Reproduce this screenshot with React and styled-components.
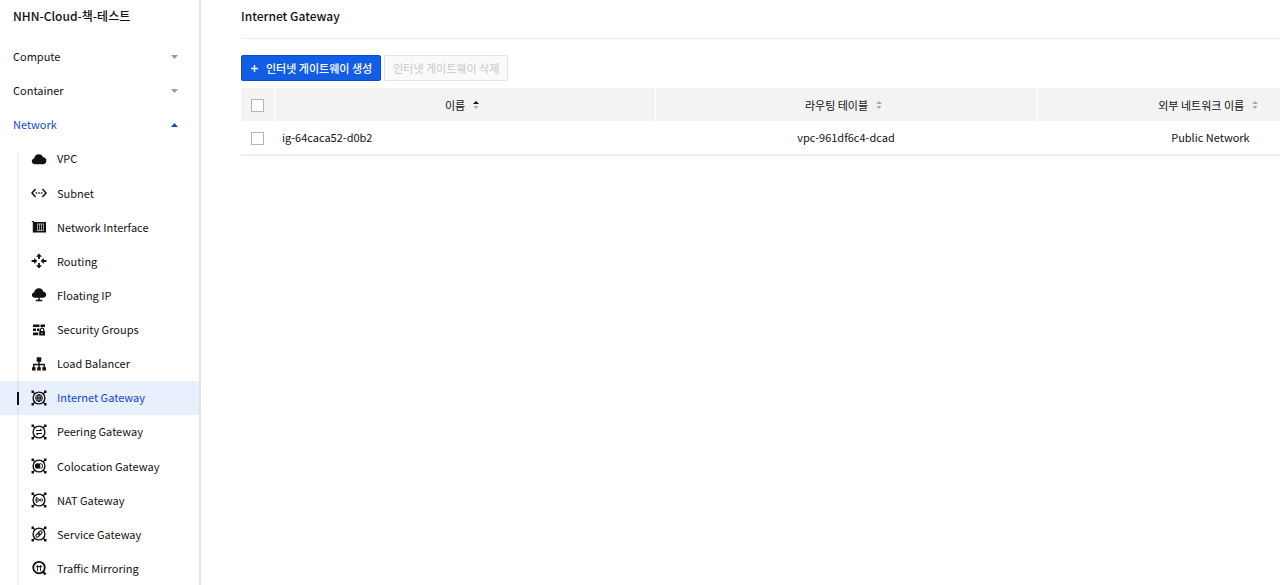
import React, { useState } from 'react';
import styled, { createGlobalStyle } from 'styled-components';

const GlobalStyle = createGlobalStyle`
  * {
    box-sizing: border-box;
  }
  body {
    margin: 0;
    background: #fff;
    color: #111;
    font-family: 'Noto Sans CJK KR', 'Noto Sans', sans-serif;
    font-size: 11px;
    line-height: 15px;
  }
  button, input {
    font-family: inherit;
  }
`;

const Layout = styled.div`
  display: flex;
  height: 100vh;
  overflow: hidden;
`;

const Sidebar = styled.nav`
  flex: 0 0 201px;
  border-right: 2px solid #e4e4e4;
  overflow: hidden;
`;

const ProjectName = styled.div`
  padding: 7px 13px 0;
  height: 40px;
  font-size: 12px;
  font-weight: 500;
  line-height: 18px;
`;

const Menu = styled.div`
  display: grid;
  grid-template-rows: repeat(3, 1fr) 13fr;
  min-height: 546px;
`;

const MenuButton = styled.button`
  display: flex;
  align-items: center;
  justify-content: space-between;
  width: 100%;
  padding: 0 21px 1px 13px;
  border: 0;
  background: none;
  color: ${({ $open }) => ($open ? '#0b49cf' : '#111')};
  font-size: 11px;
  line-height: 15px;
  cursor: pointer;
`;

const SubMenu = styled.ul`
  display: grid;
  grid-auto-rows: 1fr;
  margin: 0;
  padding: 0;
  list-style: none;
`;

const SubItem = styled.li`
  display: flex;
  padding-left: 17px;
  background: ${({ $active }) => ($active ? '#e8effd' : 'transparent')};
`;

const Guide = styled.span`
  display: flex;
  align-items: center;
  width: 2px;
  background: ${({ $active }) => ($active ? '#e0e6f2' : '#efefef')};

  ${SubItem}:first-child & {
    margin-top: 10px;
  }
`;

const Marker = styled.span`
  width: 2px;
  height: 13px;
  background: #111;
`;

const SubLink = styled.a`
  display: flex;
  flex: 1;
  align-items: center;
  gap: 10px;
  padding: 0 0 1px 12px;
  color: ${({ $active }) => ($active ? '#0b49cf' : '#111')};
  text-decoration: none;
  white-space: nowrap;
`;

const Icon = styled.svg`
  flex: none;
  width: 16px;
  height: 16px;
  fill: none;
  stroke: #111;
  color: #111;
`;

const Main = styled.main`
  flex: 1;
  min-width: 0;
  padding-left: 40px;
  overflow: hidden;
`;

const PageTitle = styled.h1`
  margin: 0;
  padding-top: 7px;
  height: 39px;
  border-bottom: 1px solid #eee;
  font-size: 12px;
  font-weight: 500;
  line-height: 18px;
`;

const Toolbar = styled.div`
  display: flex;
  gap: 3px;
  padding: 16px 0 7px;
`;

const Button = styled.button`
  display: flex;
  align-items: center;
  gap: 7px;
  height: 26px;
  padding: 0 8px;
  border: 1px solid ${({ $primary }) => ($primary ? '#0a4bd6' : '#e2e2e2')};
  border-radius: 2px;
  background: ${({ $primary }) => ($primary ? '#125de6' : '#fafafa')};
  color: ${({ $primary }) => ($primary ? '#fff' : '#c8c8c8')};
  font-size: 11px;
  font-weight: ${({ $primary }) => ($primary ? 500 : 400)};
  line-height: 16px;
  white-space: nowrap;
`;

const Table = styled.table`
  width: 110%;
  border-collapse: collapse;
  table-layout: fixed;
`;

const Th = styled.th`
  width: ${({ $width }) => $width || 'auto'};
  height: 33px;
  padding: 0 ${({ $first }) => ($first ? '0' : '5px')} 0 0;
  border-left: ${({ $first }) => ($first ? '0' : '1px solid #fff')};
  background: #f3f3f3;
  font-weight: 400;
`;

const Td = styled.td`
  height: 34px;
  padding: 0 8px;
  border-bottom: 2px solid #eee;
  text-align: ${({ $align }) => $align || 'center'};
`;

const CheckCell = styled.div`
  display: flex;
  padding: 2px 0 0 ${({ $body }) => ($body ? '2px' : '10px')};
`;

const Checkbox = styled.input`
  appearance: none;
  width: 13px;
  height: 13px;
  margin: 0;
  border: 1px solid #b4b4b4;
  background: #fff;

  &:checked {
    background: #125de6;
  }
`;

const SortButton = styled.button`
  display: inline-flex;
  align-items: center;
  gap: 8px;
  padding: 0;
  border: 0;
  background: none;
  color: #111;
  font-size: 11px;
  line-height: 15px;
  vertical-align: middle;
`;

const Arrow = ({ open }) => (
  <svg width="7" height="4" viewBox="0 0 7 4">
    <path
      d={open ? 'M0 4L3.5 0L7 4Z' : 'M0 0H7L3.5 4Z'}
      fill={open ? '#0b49cf' : '#999'}
    />
  </svg>
);

const PlusIcon = () => (
  <svg width="9" height="8" viewBox="0 0 9 8">
    <path d="M4.5 1V8M1 4.5H8" stroke="#fff" strokeWidth="1.4" />
  </svg>
);

const SortIcon = ({ sorted }) => (
  <svg width="6" height="8" viewBox="0 0 6 8">
    <path d="M0 3L3 0L6 3Z" fill={sorted ? '#111' : '#aaa'} />
    <path d="M0.5 5H5.5L3 8Z" fill="#aaa" />
  </svg>
);

// ring with four corner nodes, shared by every gateway icon
const GatewayFrame = ({ children }) => (
  <>
    <circle cx="8" cy="8" r="5.9" strokeWidth="1.4" />
    <path
      d="M1.5 1.5L4 4M14.5 1.5L12 4M1.5 14.5L4 12M14.5 14.5L12 12"
      strokeWidth="1.3"
    />
    <path
      d="M.5.5h2.5v2.5H.5zM13 .5h2.5v2.5H13zM.5 13h2.5v2.5H.5zM13 13h2.5v2.5H13z"
      fill="currentColor"
      stroke="none"
    />
    {children}
  </>
);

const icons = {
  vpc: (
    <path
      d="M4 13.2C2.1 13.2.8 12 .8 10.3c0-1.5 1-2.6 2.3-2.9C3.4 4.9 5.3 3.2 7.7 3.2c2 0 3.6 1.1 4.3 2.9 1.9.3 3.4 1.8 3.4 3.7 0 2-1.5 3.4-3.5 3.4z"
      fill="currentColor"
      stroke="none"
    />
  ),
  subnet: (
    <>
      <path d="M4.6 4L1 8l3.6 4M11.4 4L15 8l-3.6 4" strokeWidth="1.5" />
      <path
        d="M4.7 7.3h1.4v1.4H4.7zM7.3 7.3h1.4v1.4H7.3zM9.9 7.3h1.4v1.4H9.9z"
        fill="currentColor"
        stroke="none"
      />
    </>
  ),
  nic: (
    <>
      <path
        d="M.8 2h2v1H15v10.5H1.8V3H.8z"
        fill="currentColor"
        stroke="none"
      />
      <path
        d="M6.5 5v6.5M8.5 5v6.5M10.5 5v6.5M12.5 5v6.5M6 5h7M6 11.5h7"
        stroke="#bbb"
        strokeWidth=".8"
      />
    </>
  ),
  routing: (
    <>
      <path d="M8 2V6M8 10v4M.6 8H4M12 8h3.4" strokeWidth="1.8" />
      <path
        d="M8 .4L5 3.8h6zM8 15.6L5 12.2h6zM6.3 8L3.2 5v6zM9.7 8l3.1-3v6z"
        fill="currentColor"
        stroke="none"
      />
    </>
  ),
  floating: (
    <>
      <path
        d="M4 10.8C2.1 10.8.9 9.7.9 8.1c0-1.4.8-2.4 2.2-2.7C3.4 3 5.4 1.3 7.8 1.3c2.2 0 3.8 1.2 4.4 3.1 1.8.4 3 1.6 3 3.2 0 1.9-1.4 3.2-3.3 3.2z"
        fill="currentColor"
        stroke="none"
      />
      <path d="M8 10.5v3M4.8 13.5h6.4" strokeWidth="1.5" />
    </>
  ),
  security: (
    <>
      <path
        d="M2 2.5h6.5v2.5H2zM9.5 2.5h4.5v2.5H9.5zM2 6.5h3v2.5H2zM6 6.5h2.5v2.5H6zM2 10.5h5.3v2.8H2zM8.2 9h5.8v4.5H8.2z"
        fill="currentColor"
        stroke="none"
      />
      <path d="M9.5 9V7.8c0-2.2 3.2-2.2 3.2 0V9" strokeWidth="1.1" />
      <path d="M11.1 10.5v1.5" stroke="#fff" strokeWidth=".8" />
    </>
  ),
  balancer: (
    <>
      <path
        d="M5.7 1.3h4.6v4.5H5.7zM1 11.2h3.6v3.2H1zM6.2 11.2h3.6v3.2H6.2zM11.4 11.2H15v3.2h-3.6z"
        fill="currentColor"
        stroke="none"
      />
      <path d="M8 5v7M2.8 12V8.5h10.4V12" strokeWidth="1.4" />
    </>
  ),
  internet: (
    <GatewayFrame>
      <circle cx="8" cy="8" r="3.4" />
      <ellipse cx="8" cy="8" rx="1.5" ry="3.4" strokeWidth=".9" />
      <path d="M4.6 8h6.8M8 4.6v6.8" strokeWidth=".9" />
    </GatewayFrame>
  ),
  peering: (
    <GatewayFrame>
      <path d="M5 6.5h5.5M5.5 9.5H11" />
      <path
        d="M9 4.4l2.6 2.1H9zM7 11.6L4.4 9.5H7z"
        fill="currentColor"
        stroke="none"
      />
    </GatewayFrame>
  ),
  colocation: (
    <GatewayFrame>
      <circle cx="6.6" cy="8" r="2.8" fill="currentColor" stroke="none" />
      <circle cx="9.4" cy="8" r="2.3" strokeWidth=".9" />
    </GatewayFrame>
  ),
  nat: (
    <GatewayFrame>
      <path d="M5.3 5.3v5.4L9 8zM3.8 8h4" strokeWidth=".9" />
      <circle cx="10.5" cy="8" r="1.2" strokeWidth=".9" />
    </GatewayFrame>
  ),
  service: (
    <GatewayFrame>
      <g transform="rotate(-45 8 8)">
        <rect x="4.2" y="6.6" width="4.7" height="2.8" rx="1.4" />
        <rect x="7.1" y="6.6" width="4.7" height="2.8" rx="1.4" />
      </g>
    </GatewayFrame>
  ),
  mirroring: (
    <>
      <circle cx="8" cy="7.6" r="5.8" strokeWidth="1.8" />
      <path d="M11.8 11.5l2.8 3" strokeWidth="2.3" />
      <path
        d="M6.5 11V6M9.5 11V6M4.8 7.3l1.7-2 1.7 2M7.9 7.3l1.6-2 1.7 2"
        strokeWidth=".9"
      />
    </>
  ),
};

const networkMenus = [
  { label: 'VPC', icon: 'vpc' },
  { label: 'Subnet', icon: 'subnet' },
  { label: 'Network Interface', icon: 'nic' },
  { label: 'Routing', icon: 'routing' },
  { label: 'Floating IP', icon: 'floating' },
  { label: 'Security Groups', icon: 'security' },
  { label: 'Load Balancer', icon: 'balancer' },
  { label: 'Internet Gateway', icon: 'internet' },
  { label: 'Peering Gateway', icon: 'peering' },
  { label: 'Colocation Gateway', icon: 'colocation' },
  { label: 'NAT Gateway', icon: 'nat' },
  { label: 'Service Gateway', icon: 'service' },
  { label: 'Traffic Mirroring', icon: 'mirroring' },
];

const gateways = [
  {
    name: 'ig-64caca52-d0b2',
    routing: 'vpc-961df6c4-dcad',
    network: 'Public Network',
  },
];

function SideMenu({ active, onSelect }) {
  return (
    <Sidebar>
      <ProjectName>NHN-Cloud-책-테스트</ProjectName>
      <Menu>
        <MenuButton type="button">
          Compute
          <Arrow />
        </MenuButton>
        <MenuButton type="button">
          Container
          <Arrow />
        </MenuButton>
        <MenuButton type="button" $open>
          Network
          <Arrow open />
        </MenuButton>
        <SubMenu>
          {networkMenus.map(({ label, icon }) => (
            <SubItem key={label} $active={label === active}>
              <Guide $active={label === active}>
                {label === active && <Marker />}
              </Guide>
              <SubLink
                href={`#${icon}`}
                $active={label === active}
                onClick={() => onSelect(label)}
              >
                <Icon viewBox="0 0 16 16">{icons[icon]}</Icon>
                {label}
              </SubLink>
            </SubItem>
          ))}
        </SubMenu>
      </Menu>
    </Sidebar>
  );
}

function GatewayTable() {
  return (
    <Table>
      <thead>
        <tr>
          <Th $first $width="33px">
            <CheckCell>
              <Checkbox type="checkbox" aria-label="전체 선택" />
            </CheckCell>
          </Th>
          <Th $width="381px">
            <SortButton type="button">
              이름
              <SortIcon sorted />
            </SortButton>
          </Th>
          <Th $width="382px">
            <SortButton type="button">
              라우팅 테이블
              <SortIcon />
            </SortButton>
          </Th>
          <Th>
            <SortButton type="button">
              외부 네트워크 이름
              <SortIcon />
            </SortButton>
          </Th>
        </tr>
      </thead>
      <tbody>
        {gateways.map(({ name, routing, network }) => (
          <tr key={name}>
            <Td>
              <CheckCell $body>
                <Checkbox type="checkbox" aria-label={name} />
              </CheckCell>
            </Td>
            <Td $align="left">{name}</Td>
            <Td>{routing}</Td>
            <Td>{network}</Td>
          </tr>
        ))}
      </tbody>
    </Table>
  );
}

function App() {
  const [active, setActive] = useState('Internet Gateway');

  return (
    <>
      <GlobalStyle />
      <Layout>
        <SideMenu active={active} onSelect={setActive} />
        <Main>
          <PageTitle>Internet Gateway</PageTitle>
          <Toolbar>
            <Button type="button" $primary>
              <PlusIcon />
              인터넷 게이트웨이 생성
            </Button>
            <Button type="button" disabled>
              인터넷 게이트웨이 삭제
            </Button>
          </Toolbar>
          <GatewayTable />
        </Main>
      </Layout>
    </>
  );
}

export default App;
